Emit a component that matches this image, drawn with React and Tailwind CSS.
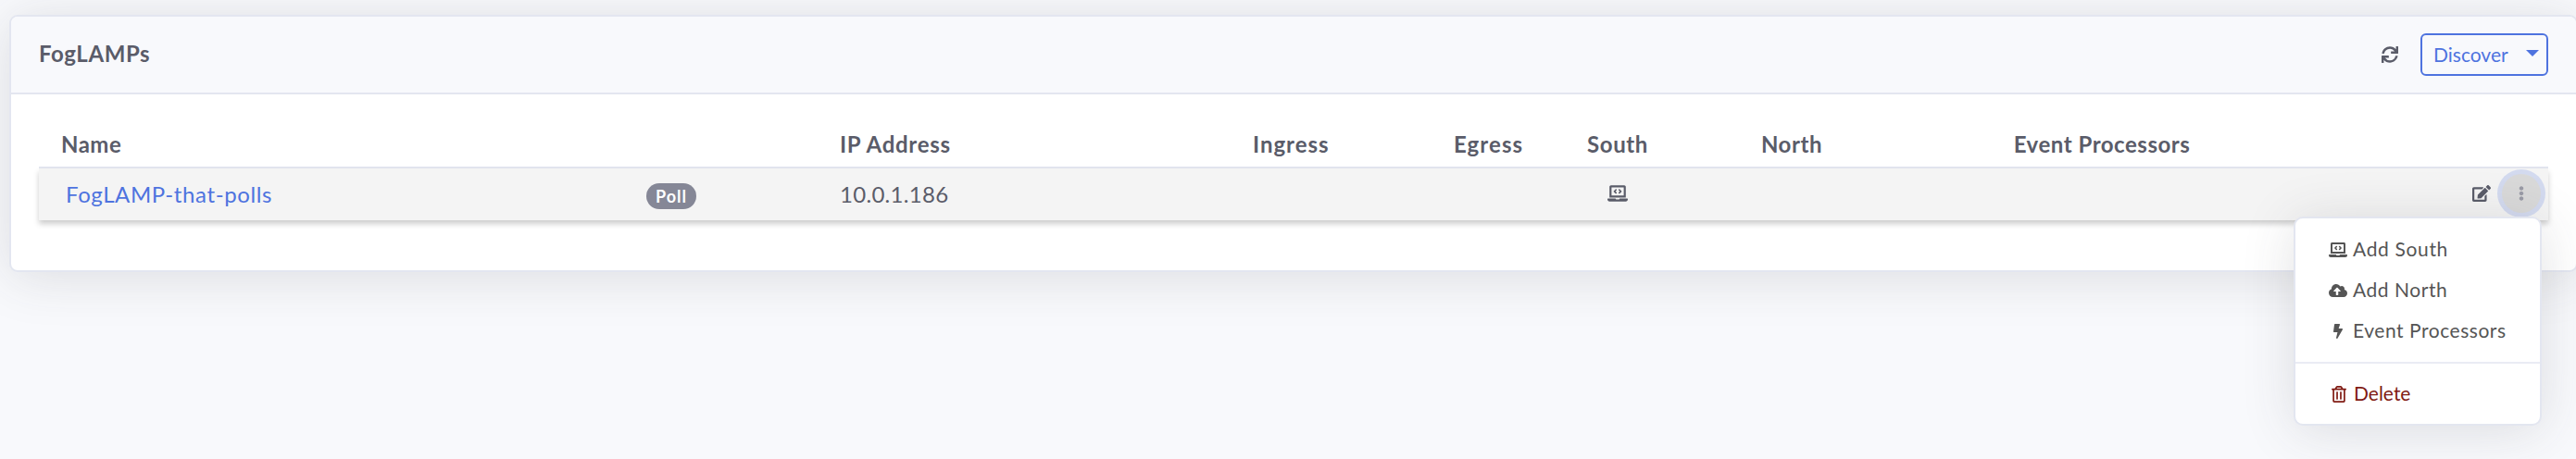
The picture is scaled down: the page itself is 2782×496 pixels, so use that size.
import React from "react";
import {
  FaBolt,
  FaCloudUploadAlt,
  FaEdit,
  FaEllipsisV,
  FaLaptopCode,
  FaRegTrashAlt,
  FaSync,
} from "react-icons/fa";

const columns =
  "grid grid-cols-[656px_208px_446px_217px_111px_134px_242px_428px_268px]";

function MenuItem({ icon, children, className = "" }) {
  return (
    <button
      type="button"
      className={`flex h-11 w-full items-center whitespace-nowrap pl-9 text-[21px] leading-none ${className}`}
    >
      <span className="mr-1.5 flex w-5 shrink-0 justify-center pt-[3px]">{icon}</span>
      {children}
    </button>
  );
}

function ActionsMenu() {
  return (
    <div className="absolute right-[7px] top-[52px] h-[226px] w-[268px] rounded-[10px] border-2 border-[#e3e6f0] bg-white pt-[10px] text-[#555555] shadow-[0_5px_56px_0_rgba(58,59,69,0.15)]">
      <MenuItem icon={<FaLaptopCode size={20} />}>
        <span className="tracking-[0.65px]">Add South</span>
      </MenuItem>
      <MenuItem icon={<FaCloudUploadAlt size={20} />}>
        <span className="tracking-[0.55px]">Add North</span>
      </MenuItem>
      <MenuItem icon={<FaBolt size={16} />}>
        <span className="tracking-[0.54px]">Event Processors</span>
      </MenuItem>
      <div className="mt-[13px] mb-[9px] h-[2px] bg-[#eaecf4]" />
      <MenuItem
        icon={<FaRegTrashAlt size={18} className="ml-[2px] shrink-0" />}
        className="text-[#801a12]"
      >
        <span className="ml-[1px]">Delete</span>
      </MenuItem>
    </div>
  );
}

function CardHeader() {
  return (
    <div className="flex h-[84px] items-center justify-between rounded-t-[7px] border-b-2 border-[#e3e6f0] bg-[#f8f9fc] px-[30px]">
      <h2 className="pb-[2px] text-2xl leading-none font-bold tracking-[0.57px]">FogLAMPs</h2>
      <div className="flex items-center gap-6">
        <button type="button" aria-label="Refresh">
          <FaSync size={18} />
        </button>
        <button
          type="button"
          className="flex h-[46px] w-[138px] items-center rounded-md border-2 border-[#4e73df] pl-3 text-[21px] leading-none text-[#4e73df]"
        >
          <span className="w-[100px] pb-[2px] text-left">Discover</span>
          <svg width="14" height="7" viewBox="0 0 14 7" className="mb-[4px] fill-current">
            <path d="M0 0h14L7 7z" />
          </svg>
        </button>
      </div>
    </div>
  );
}

export default function App() {
  return (
    <div className="h-[496px] w-[2782px] overflow-hidden bg-[#f8f9fc] pt-4 pl-[10px] font-['Lato','Noto_Sans',sans-serif] text-[#5a5c69]">
      <section className="h-[278px] w-[2774px] rounded-[9px] border-2 border-[#e3e6f0] bg-white shadow-[0_5px_56px_0_rgba(58,59,69,0.15)]">
        <CardHeader />
        <div className="px-[30px]">
          <div
            className={`${columns} h-20 items-end border-b-2 border-[#e3e6f0] pb-[10px] text-2xl leading-7 font-bold`}
          >
            <span className="pl-[24px] tracking-[0.5px]">Name</span>
            <span />
            <span className="pl-[1px] tracking-[0.73px]">IP Address</span>
            <span className="pl-[1px] tracking-[0.98px]">Ingress</span>
            <span className="pl-[1px] tracking-[1.1px]">Egress</span>
            <span className="text-center tracking-[0.6px]">South</span>
            <span className="text-center tracking-[0.55px]">North</span>
            <span className="text-center tracking-[0.53px]">Event Processors</span>
          </div>
          <div
            className={`${columns} relative h-14 items-center bg-[#f4f4f4] text-2xl leading-none shadow-[0_4px_6px_0_rgba(0,0,0,0.2)]`}
          >
            <a className="pl-[29px] tracking-[0.61px] text-[#4e73df]">FogLAMP-that-polls</a>
            <span className="mt-1 flex h-7 w-[54px] items-center justify-center rounded-full bg-[#858796] pb-[1px] text-lg leading-none font-bold tracking-[1px] text-white">
              Poll
            </span>
            <span className="pl-[1px] tracking-[0.3px]">10.0.1.186</span>
            <span />
            <span />
            <FaLaptopCode size={22} className="mb-[2px] justify-self-center" />
            <span />
            <span />
            <div className="flex items-center justify-end gap-[12px] pr-2">
              <FaEdit size={20} className="mb-[2px]" />
              <button
                type="button"
                aria-label="More actions"
                className="mb-[2px] flex size-[42px] items-center justify-center rounded-full bg-[#d9d9d9] text-[#9a9ba6] ring-[5px] ring-[#d3daef]"
              >
                <FaEllipsisV size={16} />
              </button>
            </div>
            <ActionsMenu />
          </div>
        </div>
      </section>
    </div>
  );
}
